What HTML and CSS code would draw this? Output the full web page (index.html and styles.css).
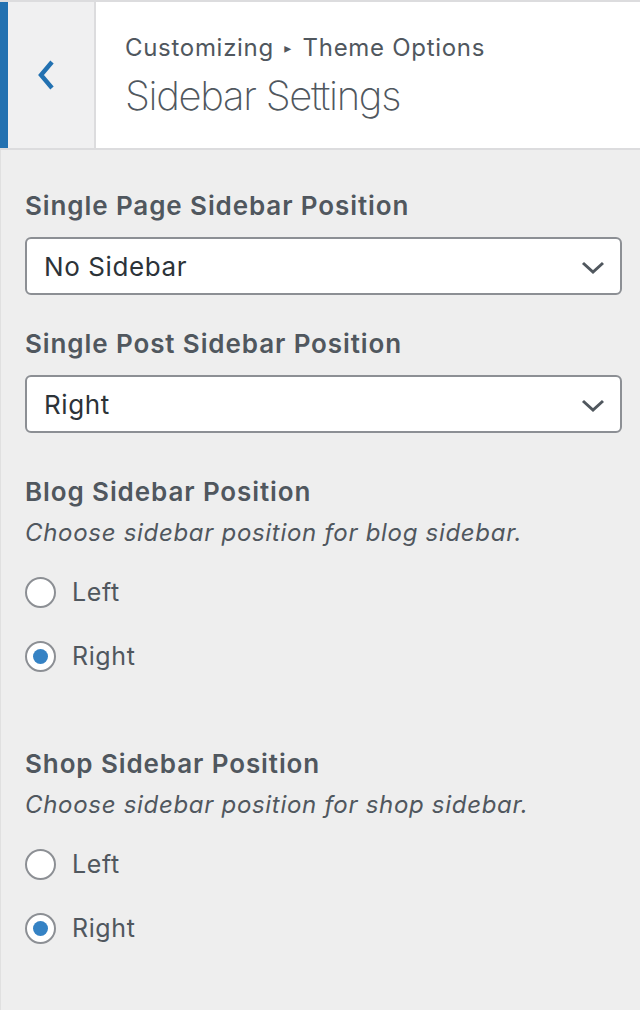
FILE: index.html
```html
<!DOCTYPE html>
<html lang="en">
<head>
<meta charset="utf-8">
<title>Sidebar Settings</title>
<link rel="stylesheet" href="styles.css">
</head>
<body>
<div class="panel">
  <header class="panel-header">
    <button class="back" type="button" aria-label="Back">
      <svg width="20" height="32" viewBox="0 0 20 32"><polyline points="15,3 4,16 15,29" fill="none" stroke="#2271b1" stroke-width="4.4" stroke-linecap="butt" stroke-linejoin="miter"/></svg>
    </button>
    <div class="titles">
      <div class="crumb">Customizing <span class="arrow">▸</span> Theme Options</div>
      <h1 class="section-title">Sidebar Settings</h1>
    </div>
  </header>
  <main class="controls">
    <div class="control control-select">
      <div class="control-title">Single Page Sidebar Position</div>
      <div class="select">
        <span class="select-value">No Sidebar</span>
        <svg class="caret" width="24" height="14" viewBox="0 0 24 14"><polyline points="2,2 12,11 22,2" fill="none" stroke="#50575e" stroke-width="3"/></svg>
      </div>
    </div>
    <div class="control control-select">
      <div class="control-title">Single Post Sidebar Position</div>
      <div class="select">
        <span class="select-value">Right</span>
        <svg class="caret" width="24" height="14" viewBox="0 0 24 14"><polyline points="2,2 12,11 22,2" fill="none" stroke="#50575e" stroke-width="3"/></svg>
      </div>
    </div>
    <div class="control control-radio">
      <div class="control-title">Blog Sidebar Position</div>
      <div class="description">Choose sidebar position for blog sidebar.</div>
      <div class="radio-row"><span class="radio"></span><span class="radio-label">Left</span></div>
      <div class="radio-row"><span class="radio checked"></span><span class="radio-label">Right</span></div>
    </div>
    <div class="control control-radio shop">
      <div class="control-title">Shop Sidebar Position</div>
      <div class="description">Choose sidebar position for shop sidebar.</div>
      <div class="radio-row"><span class="radio"></span><span class="radio-label">Left</span></div>
      <div class="radio-row"><span class="radio checked"></span><span class="radio-label">Right</span></div>
    </div>
  </main>
</div>
</body>
</html>
```
FILE: styles.css
```css
html, body {
  margin: 0;
  padding: 0;
  background: #eeeeee;
}
body {
  font-family: Inter, "Noto Sans", "Liberation Sans", sans-serif;
  color: #50575e;
  width: 640px;
  height: 1010px;
  overflow: hidden;
}
.panel {
  display: flex;
  flex-direction: column;
  min-height: 1010px;
  border-left: 1px solid #e0e0e0;
  box-sizing: border-box;
}
.panel-header {
  display: flex;
  height: 150px;
  border-top: 2px solid #dcdcde;
  border-bottom: 2px solid #dcdcde;
  background: #ffffff;
  box-sizing: border-box;
  margin-left: -1px;
}
.back {
  width: 96px;
  flex: none;
  border: 0;
  border-left: 8px solid #2271b1;
  border-right: 2px solid #dcdcde;
  background: #f0f0f1;
  display: flex;
  align-items: center;
  justify-content: center;
  padding: 0;
  box-sizing: border-box;
}
.back svg { margin-left: -8px; }
.titles {
  padding: 28px 0 0 29px;
}
.crumb {
  font-size: 24px;
  line-height: 36px;
  color: #50575e;
  font-weight: 400;
  letter-spacing: 0.7px;
}
.arrow {
  font-family: "DejaVu Sans", sans-serif;
  font-size: 14px;
  vertical-align: 3px;
  margin: 0 3px;
}
.section-title {
  margin: 6px 0 0;
  font-size: 40px;
  line-height: 48px;
  font-weight: 200;
  letter-spacing: -1.3px;
  color: #50575e;
}
.controls {
  padding: 38px 18px 0 24px;
  display: flex;
  flex-direction: column;
}
.control-title {
  font-size: 26px;
  line-height: 36px;
  font-weight: 600;
  letter-spacing: 0.9px;
  color: #50575e;
}
.control-select .control-title { margin-bottom: 13px; }
.control-select { margin-bottom: 31px; }
.control-select + .control-radio { margin-top: 10px; }
.select {
  height: 58px;
  box-sizing: border-box;
  border: 2px solid #8c8f94;
  border-radius: 6px;
  background: #ffffff;
  display: flex;
  align-items: center;
  justify-content: space-between;
  padding: 3px 15px 0 17px;
}
.select-value {
  font-size: 26px;
  letter-spacing: 0.6px;
  color: #2c3338;
  margin-top: -3px;
}
.description {
  font-size: 24px;
  line-height: 36px;
  font-style: italic;
  letter-spacing: 0.7px;
  margin-top: 5px;
  color: #50575e;
}
.radio-row {
  display: flex;
  align-items: center;
  height: 48px;
  margin-top: 16px;
}
.description + .radio-row { margin-top: 17px; }
.radio {
  width: 31px;
  height: 31px;
  box-sizing: border-box;
  border: 2px solid #8c8f94;
  border-radius: 50%;
  background: #ffffff;
  flex: none;
  display: flex;
  align-items: center;
  justify-content: center;
}
.radio.checked::before {
  content: "";
  width: 15px;
  height: 15px;
  border-radius: 50%;
  background: #3582c4;
}
.radio-label {
  margin-left: 16px;
  font-size: 25px;
  letter-spacing: 0.6px;
  color: #50575e;
}
.shop { margin-top: 66px; }
```
